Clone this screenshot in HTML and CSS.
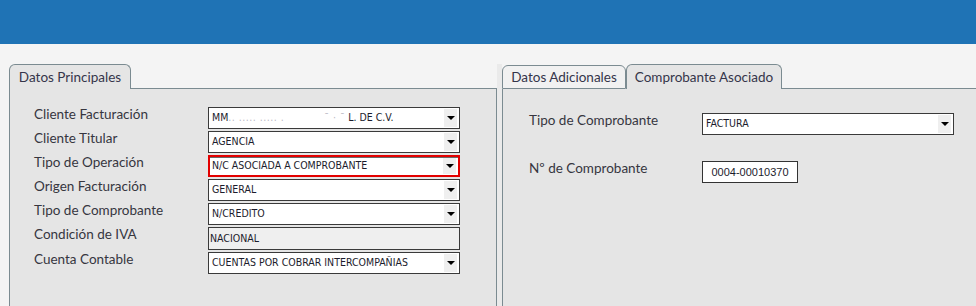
FILE: index.html
```html
<!DOCTYPE html>
<html lang="es">
<head>
  <meta charset="UTF-8" />
  <title>Nota de Crédito</title>
  <link rel="stylesheet" href="styles.css">
</head>
<body>

  <header class="topbar"></header>

  <main class="workspace">

    <!-- Datos principales -->
    <section class="panel panel-main">
      <div class="tabs">
        <div class="tab tab-active tab-principal">Datos Principales</div>
        <div class="tab-fill"></div>
      </div>
      <div class="panel-body">
        <div class="form-grid">
          <label class="field-label">Cliente Facturación</label>
          <div class="combo">
            <span class="combo-value">MM<span class="blur">.. ..... ..... .</span><span class="gap"></span><span class="blur">ˉ · ˉ</span> L. DE C.V.</span>
            <span class="combo-btn"></span>
          </div>

          <label class="field-label">Cliente Titular</label>
          <div class="combo">
            <span class="combo-value">AGENCIA</span>
            <span class="combo-btn"></span>
          </div>

          <label class="field-label">Tipo de Operación</label>
          <div class="combo combo-alert">
            <span class="combo-value">N/C ASOCIADA A COMPROBANTE</span>
            <span class="combo-btn"></span>
          </div>

          <label class="field-label">Origen Facturación</label>
          <div class="combo">
            <span class="combo-value">GENERAL</span>
            <span class="combo-btn"></span>
          </div>

          <label class="field-label">Tipo de Comprobante</label>
          <div class="combo">
            <span class="combo-value">N/CREDITO</span>
            <span class="combo-btn"></span>
          </div>

          <label class="field-label">Condición de IVA</label>
          <div class="readonly">NACIONAL</div>

          <label class="field-label">Cuenta Contable</label>
          <div class="combo">
            <span class="combo-value">CUENTAS POR COBRAR INTERCOMPAÑIAS</span>
            <span class="combo-btn"></span>
          </div>
        </div>
      </div>
    </section>

    <div class="divider"></div>

    <!-- Datos adicionales / comprobante asociado -->
    <section class="panel panel-side">
      <div class="tabs">
        <div class="tab tab-idle tab-adicionales">Datos Adicionales</div>
        <div class="tab tab-active tab-asociado">Comprobante Asociado</div>
        <div class="tab-fill"></div>
      </div>
      <div class="panel-body side-body">
        <div class="form-grid side-grid">
          <label class="field-label">Tipo de Comprobante</label>
          <div class="combo">
            <span class="combo-value">FACTURA</span>
            <span class="combo-btn"></span>
          </div>

          <label class="field-label">Nº de Comprobante</label>
          <div class="textbox">0004-00010370</div>
        </div>
      </div>
    </section>

  </main>

</body>
</html>
```

FILE: styles.css
```css
* {
  box-sizing: border-box;
  margin: 0;
  padding: 0;
}

body {
  font-family: 'Lato', 'Open Sans', sans-serif;
  background: #f4f4f4;
  color: #3a3a3a;
  height: 306px;
  overflow: hidden;
}

.topbar {
  height: 44px;
  background: #1f73b5;
}

.workspace {
  display: flex;
  height: 262px;
  padding: 20px 0 0 9px;
}

.panel {
  display: flex;
  flex-direction: column;
}

.panel-main {
  width: 488px;
}

.panel-side {
  flex: 1;
}

.divider {
  width: 5px;
  background: #eaeaea;
}

/* tabs */
.tabs {
  display: flex;
  align-items: flex-end;
  height: 25px;
}

.tab {
  height: 25px;
  border: 1px solid #7b8b91;
  border-bottom: none;
  border-radius: 6px 6px 0 0;
  background: #e5e5e5;
  font-size: 13.5px;
  line-height: 25px;
  text-align: center;
  color: #35354a;
  white-space: nowrap;
}

.tab-idle {
  height: 24px;
  line-height: 23px;
  background: #f1f1f1;
  border-bottom: 1px solid #7b8b91;
}

.tab-principal {
  width: 122px;
}

.tab-adicionales {
  width: 124px;
}

.tab-asociado {
  width: 156px;
}

.tab-fill {
  flex: 1;
  border-bottom: 1px solid #7b8b91;
}

.panel-body {
  flex: 1;
  background: #e5e5e5;
  border-left: 1px solid #7b8b91;
  border-right: 1px solid #7b8b91;
  padding: 18px 0 0 24px;
}

.side-body {
  border-right: none;
  padding: 24px 0 0 26px;
}

/* form */
.form-grid {
  display: grid;
  grid-template-columns: 174px 252px;
  row-gap: 2px;
  align-items: start;
}

.side-grid {
  grid-template-columns: 173px auto;
  row-gap: 26px;
  justify-items: start;
}

.side-grid .combo {
  width: 252px;
}

.field-label {
  font-size: 13.5px;
  line-height: 15px;
  color: #36363f;
}

.combo {
  display: flex;
  height: 22px;
  border: 1px solid #3a3a3a;
  background: #fff;
}

.combo-alert {
  border: 2px solid #e30000;
  box-shadow: inset 0 1px 0 #6a6a6a;
}

.combo-value {
  flex: 1;
  padding-left: 3px;
  font-family: 'DejaVu Sans Condensed', 'DejaVu Sans', sans-serif;
  font-stretch: condensed;
  font-size: 10.5px;
  line-height: 19px;
  color: #1c1c2c;
  white-space: nowrap;
  overflow: hidden;
}

.combo-alert .combo-value {
  padding-left: 2px;
  line-height: 17px;
}

.combo-btn {
  width: 13px;
  margin: 1px 2px 1px 0;
  background: #efefef;
  display: flex;
  align-items: center;
  justify-content: center;
}

.combo-btn::after {
  content: "";
  border-left: 4px solid transparent;
  border-right: 4px solid transparent;
  border-top: 4px solid #000;
}

.blur {
  color: #b9b9c4;
  letter-spacing: 0.5px;
}

.gap {
  display: inline-block;
  width: 40px;
}

.readonly {
  height: 23px;
  border: 1px solid #3a3a3a;
  background: #efefef;
  padding-left: 1px;
  font-family: 'DejaVu Sans Condensed', 'DejaVu Sans', sans-serif;
  font-stretch: condensed;
  font-size: 10.5px;
  line-height: 20px;
  color: #1c1c2c;
}

.textbox {
  width: 96px;
  height: 22px;
  border: 1px solid #333;
  background: #fff;
  font-family: 'Liberation Sans', Arial, sans-serif;
  font-size: 11px;
  line-height: 20px;
  text-align: center;
  color: #1c1c2c;
}
```
